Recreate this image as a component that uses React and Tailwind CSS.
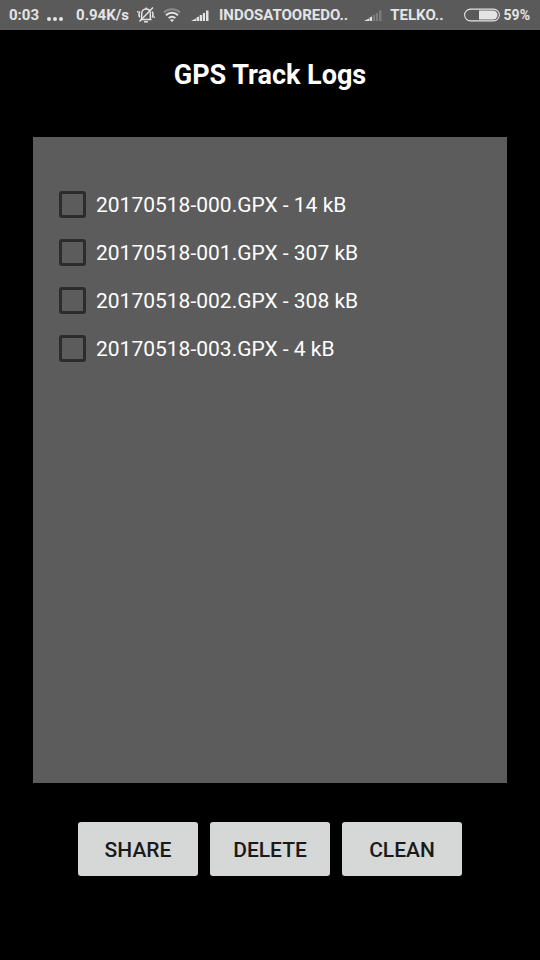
import { useState } from 'react';

const LOGS = [
  { name: '20170518-000.GPX', size: '14 kB' },
  { name: '20170518-001.GPX', size: '307 kB' },
  { name: '20170518-002.GPX', size: '308 kB' },
  { name: '20170518-003.GPX', size: '4 kB' },
];

function MutedBellIcon() {
  return (
    <svg width="18" height="18" viewBox="0 0 18 18" fill="none" stroke="currentColor" strokeWidth="1.4" aria-hidden="true">
      <path d="M3.500 13.500h11M4.700 13V7.500C4.700 5 6.300 3 9 3s4.300 2 4.300 4.500V13" />
      <path d="M7 15.800h4M9 1.500V3M16 1.500 2.500 15.500" />
      <path d="M2.800 5.500C1.600 7.500 1.600 9.500 2.800 11.500M15.200 5.500c1.200 2 1.200 4 0 6M.8 5v1.500M17.200 10.500V12" />
    </svg>
  );
}

function WifiIcon() {
  return (
    <svg width="18" height="14" viewBox="0 0 18 14" fill="none" stroke="currentColor" strokeWidth="2" aria-hidden="true">
      <path d="M1 4.400C5.500 .2 12.500 .2 17 4.400" opacity="0.35" />
      <path d="M3 7.200c3.300-3.200 8.700-3.200 12 0" />
      <path d="M5.700 10.100c1.800-1.800 4.800-1.800 6.600 0" />
      <path d="M7 12c1.200-1 2.800-1 4 0l-2 2z" fill="currentColor" stroke="none" />
    </svg>
  );
}

function SignalIcon({ level }) {
  const bars = [
    'M0 12 5 9.500V12z',
    'M5.500 8.500 8 7.500V12H5.500z',
    'M8.700 6H11v6H8.700z',
    'M11.800 4H14v8h-2.200z',
    'M15 1.500h2.500V12H15z',
  ];
  return (
    <svg width="18" height="12" viewBox="0 0 18 12" fill="currentColor" aria-hidden="true">
      {bars.map((d, i) => (
        <path key={d} d={d} opacity={i < level ? 1 : 0.25} />
      ))}
    </svg>
  );
}

function BatteryIcon() {
  return (
    <svg width="36" height="14" viewBox="0 0 36 14" aria-hidden="true">
      <rect x="0.600" y="1.100" width="34.800" height="11.800" rx="5.900" fill="none" stroke="currentColor" strokeWidth="1.100" />
      <path d="M15 2.500h14a4.500 4.500 0 0 1 0 9H15z" fill="currentColor" />
    </svg>
  );
}

function StatusBar() {
  return (
    <header className="flex h-[30px] items-center justify-between bg-[#5a5a5a] pl-[9px] pr-[10px] text-[15px] leading-5 font-bold text-[#e4e4e4]">
      <div className="flex items-center">
        <span>0:03</span>
        <svg className="ml-2 mt-2" width="18" height="4" viewBox="0 0 18 4" fill="currentColor" aria-hidden="true">
          <circle cx="2" cy="2" r="2" />
          <circle cx="8" cy="2" r="2" />
          <circle cx="14" cy="2" r="2" />
        </svg>
        <span className="ml-[11px]">0.94K/s</span>
      </div>
      <div className="flex items-center">
        <MutedBellIcon />
        <span className="ml-2"><WifiIcon /></span>
        <span className="ml-[10px]"><SignalIcon level={5} /></span>
        <span className="ml-[10px]">INDOSATOOREDO..</span>
        <span className="ml-4"><SignalIcon level={2} /></span>
        <span className="ml-2">TELKO..</span>
        <span className="ml-5"><BatteryIcon /></span>
        <span className="ml-1 text-sm">59%</span>
      </div>
    </header>
  );
}

function ActionButton({ children, onClick }) {
  return (
    <button
      type="button"
      onClick={onClick}
      className="h-[54px] w-[120px] rounded-[3px] bg-[#d6d7d7] pt-[3px] text-[21px] font-medium text-[#1a1a1a]"
    >
      {children}
    </button>
  );
}

export default function App() {
  const [logs, setLogs] = useState(LOGS);
  const [selected, setSelected] = useState([]);

  const toggle = (name) => {
    setSelected((prev) => (prev.includes(name) ? prev.filter((n) => n !== name) : [...prev, name]));
  };

  const removeSelected = () => {
    setLogs(logs.filter((log) => !selected.includes(log.name)));
    setSelected([]);
  };

  return (
    <div className="flex min-h-screen flex-col bg-black font-['Roboto',sans-serif]">
      <StatusBar />
      <main className="flex flex-1 flex-col px-[33px] pt-[27px] pb-[84px]">
        <h1 className="text-center text-[27px] leading-9 font-bold text-white">GPS Track Logs</h1>

        <ul className="mt-11 flex-1 bg-[#5c5c5c] px-[26px] py-[43px]">
          {logs.map((log) => (
            <li key={log.name}>
              <label className="flex h-12 items-center gap-[10px] text-[21px] text-white">
                <input
                  type="checkbox"
                  checked={selected.includes(log.name)}
                  onChange={() => toggle(log.name)}
                  className="size-[27px] shrink-0 appearance-none rounded-[3px] border-3 border-[#2c2c2c] checked:bg-[#2c2c2c]"
                />
                <span className="pt-1">{log.name} - {log.size}</span>
              </label>
            </li>
          ))}
        </ul>

        <div className="mt-[39px] flex justify-center gap-3">
          <ActionButton>SHARE</ActionButton>
          <ActionButton onClick={removeSelected}>DELETE</ActionButton>
          <ActionButton onClick={() => setLogs([])}>CLEAN</ActionButton>
        </div>
      </main>
    </div>
  );
}
